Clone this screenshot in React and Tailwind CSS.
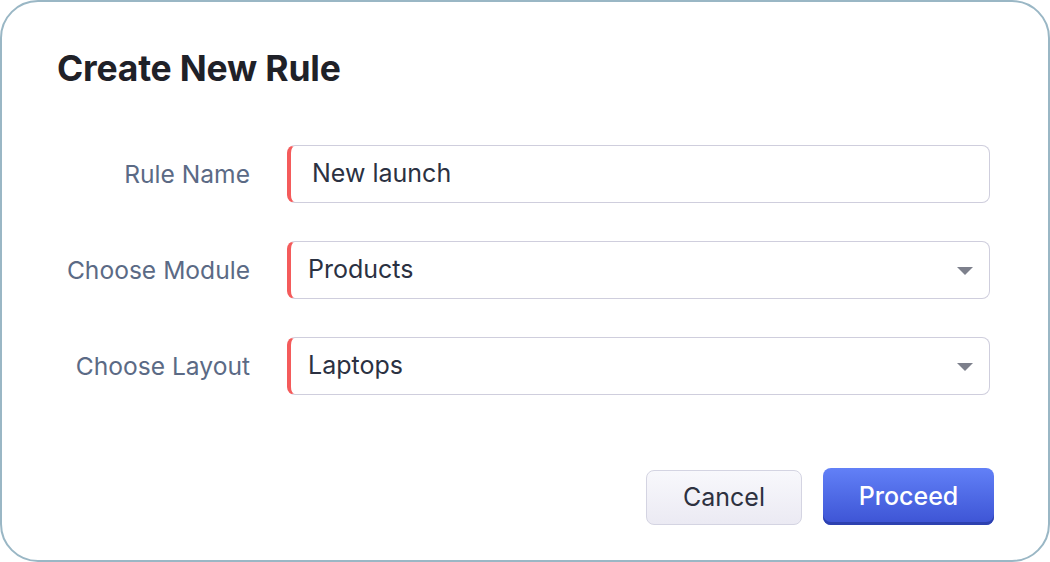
import React from "react";

function Field({ label, value, select, pl }) {
  return (
    <div className="flex items-center">
      <div className="w-[193px] text-right text-[24.6px] leading-[30px] text-[#5b6a85]">{label}</div>
      <div className="ml-[37px] w-[703px] h-[58px] flex items-center rounded-[8px] border border-[#cfcedd] border-l-[4px] border-l-[#f45b5b] bg-white relative">
        <span className={`text-[25px] text-[#2b3142] ${pl}`}>{value}</span>
        {select && (
          <svg className="absolute right-[16px] top-[25px]" width="16" height="8" viewBox="0 0 16 8">
            <path d="M0 0 H16 L8 8 Z" fill="#7d808c" />
          </svg>
        )}
      </div>
    </div>
  );
}

export default function App() {
  return (
    <div className="w-[1050px] h-[562px] bg-white" style={{ fontFamily: "Inter, 'Noto Sans', sans-serif" }}>
      <div className="w-full h-full border-2 border-[#9ab7c5] rounded-[38px] pl-[55px] pt-[45px] flex flex-col">
        <h1 className="text-[35.5px] leading-[44px] font-bold text-[#1f2128] tracking-[-0.2px]">Create New Rule</h1>
        <div className="mt-[54px] flex flex-col gap-[38px]">
          <Field label="Rule Name" value="New launch" pl="pl-[21px]" />
          <Field label="Choose Module" value="Products" select pl="pl-[17px]" />
          <Field label="Choose Layout" value="Laptops" select pl="pl-[17px]" />
        </div>
        <div className="mt-[73px] flex justify-end gap-[21px] pr-[54px]">
          <button className="w-[156px] h-[55px] mt-[2px] rounded-[8px] border border-[#d4d4e2] bg-gradient-to-b from-[#f8f8fc] to-[#ebeaf3] text-[25px] text-[#2d3140]">
            Cancel
          </button>
          <button className="w-[171px] h-[57px] rounded-[8px] bg-gradient-to-b from-[#6280f7] to-[#3d53d4] shadow-[inset_0_-3px_0_#2d41b0] text-[25px] font-medium text-white">
            Proceed
          </button>
        </div>
      </div>
    </div>
  );
}
